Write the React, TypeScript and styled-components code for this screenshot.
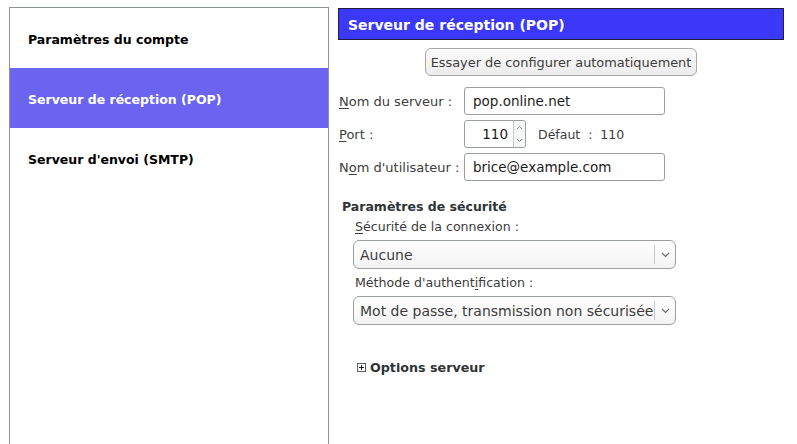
import React from "react";
import styled, { createGlobalStyle } from "styled-components";

const Global = createGlobalStyle`
  html, body { margin: 0; padding: 0; background: #ffffff; }
  body { font-family: "DejaVu Sans", "Liberation Sans", sans-serif; color: #2e3436; }
  #root { height: 444px; overflow: hidden; }
`;

const Page = styled.div`
  display: flex;
  align-items: flex-start;
  height: 444px;
  padding: 7px 0 0 9px;
  box-sizing: border-box;
  gap: 9px;
`;

const Sidebar = styled.nav`
  width: 320px;
  height: 437px;
  box-sizing: border-box;
  border: 1px solid #8c9393;
  border-bottom: none;
  display: flex;
  flex-direction: column;
`;

const NavItem = styled.div<{ $active?: boolean }>`
  height: 60px;
  box-sizing: border-box;
  padding-top: 2px;
  display: flex;
  align-items: center;
  padding-left: 18px;
  font-weight: bold;
  font-size: 12.5px;
  color: ${(p) => (p.$active ? "#ffffff" : "#000000")};
  background: ${(p) => (p.$active ? "#6a64f1" : "transparent")};
`;

const Main = styled.section`
  width: 446px;
  padding-top: 1px;
  display: flex;
  flex-direction: column;
`;

const Header = styled.div`
  height: 32px;
  box-sizing: border-box;
  background: #3b38f9;
  border: 1px solid #1f1f40;
  color: #ffffff;
  font-weight: bold;
  font-size: 14px;
  display: flex;
  align-items: center;
  padding: 1px 0 0 9px;
`;

const ButtonRow = styled.div`
  display: flex;
  justify-content: center;
  margin-top: 8px;
  margin-bottom: 11px;
`;

const Button = styled.button`
  height: 28px;
  width: 272px;
  padding: 0;
  border: 1px solid #a4a8a8;
  border-radius: 6px;
  background: linear-gradient(#fbfbfb, #ececec);
  font-family: "DejaVu Sans", "Liberation Sans", sans-serif;
  font-size: 12.9px;
  color: #3c3c3c;
`;

const FormGrid = styled.div`
  display: grid;
  grid-template-columns: 126px auto;
  row-gap: 5px;
  align-items: center;
`;

const Label = styled.span`
  font-size: 13px;
  color: #3c3c3c;
  padding-left: 1px;
  white-space: nowrap;
  u { text-decoration: underline; text-underline-offset: 2px; }
`;

const TextBox = styled.div`
  width: 201px;
  height: 28px;
  box-sizing: border-box;
  border: 1px solid #9aa0a0;
  border-radius: 3px;
  background: #ffffff;
  display: flex;
  align-items: center;
  padding-left: 8px;
  font-size: 13.5px;
  color: #1c1c1c;
`;

const PortRow = styled.div`
  display: flex;
  align-items: center;
  gap: 12px;
`;

const Spin = styled.div`
  width: 62px;
  height: 28px;
  box-sizing: border-box;
  border: 1px solid #9aa0a0;
  border-radius: 3px;
  background: #ffffff;
  display: flex;
  align-items: stretch;
`;

const SpinValue = styled.div`
  flex: 1;
  display: flex;
  align-items: center;
  justify-content: flex-end;
  padding-right: 5px;
  font-size: 13.5px;
  color: #1c1c1c;
`;

const SpinArrows = styled.div`
  width: 11px;
  border-left: 1px solid #c4c8c8;
  display: flex;
  flex-direction: column;
  align-items: center;
  justify-content: space-around;
  background: #f6f6f6;
  border-radius: 0 3px 3px 0;
`;

const Defaut = styled.span`
  font-size: 12.5px;
  color: #3c3c3c;
  word-spacing: 4px;
`;

const Section = styled.div`
  margin-top: 18px;
  padding-left: 4px;
  display: flex;
  flex-direction: column;
`;

const SectionTitle = styled.div`
  font-weight: bold;
  font-size: 12.5px;
  color: #2e3436;
  margin-bottom: 5px;
`;

const SubLabel = styled.div`
  font-size: 12.6px;
  color: #3c3c3c;
  padding-left: 13px;
  margin-bottom: 6px;
  u { text-decoration: underline; text-underline-offset: 2px; }
`;

const Select = styled.div`
  margin-left: 11px;
  width: 323px;
  height: 29px;
  box-sizing: border-box;
  border: 1px solid #9aa0a0;
  border-radius: 6px;
  background: linear-gradient(#ffffff, #f3f3f3);
  display: flex;
  align-items: center;
  margin-bottom: 6px;
`;

const SelectText = styled.div`
  flex: 1;
  padding-left: 6px;
  font-size: 14px;
  color: #3c3c3c;
  white-space: nowrap;
  overflow: hidden;
`;

const SelectArrow = styled.div`
  width: 20px;
  height: 19px;
  border-left: 1px solid #c4c8c8;
  display: flex;
  align-items: center;
  justify-content: center;
`;

const Expander = styled.div`
  margin-top: 29px;
  padding-left: 19px;
  display: flex;
  align-items: center;
  gap: 4px;
  font-weight: bold;
  font-size: 12.7px;
  color: #2e3436;
`;

const Chevron = () => (
  <svg width="9" height="6" viewBox="0 0 9 6">
    <path d="M1 1 L4.5 4.5 L8 1" fill="none" stroke="#6a6f70" strokeWidth="1.2" />
  </svg>
);

const PlusBox = () => (
  <svg width="9" height="9" viewBox="0 0 9 9">
    <rect x="0.5" y="0.5" width="8" height="8" fill="#ffffff" stroke="#5a5f60" />
    <path d="M2 4.5 H7 M4.5 2 V7" stroke="#1e1e1e" strokeWidth="1" />
  </svg>
);

export default function App() {
  return (
    <>
      <Global />
      <Page>
        <Sidebar>
          <NavItem>Paramètres du compte</NavItem>
          <NavItem $active>Serveur de réception (POP)</NavItem>
          <NavItem>Serveur d'envoi (SMTP)</NavItem>
        </Sidebar>
        <Main>
          <Header>Serveur de réception (POP)</Header>
          <ButtonRow>
            <Button>Essayer de configurer automatiquement</Button>
          </ButtonRow>
          <FormGrid>
            <Label><u>N</u>om du serveur :</Label>
            <TextBox>pop.online.net</TextBox>
            <Label><u>P</u>ort :</Label>
            <PortRow>
              <Spin>
                <SpinValue>110</SpinValue>
                <SpinArrows>
                  <svg width="7" height="5" viewBox="0 0 7 5">
                    <path d="M1 4 L3.5 1.5 L6 4" fill="none" stroke="#8a8f90" strokeWidth="1" />
                  </svg>
                  <svg width="7" height="5" viewBox="0 0 7 5">
                    <path d="M1 1 L3.5 3.5 L6 1" fill="none" stroke="#8a8f90" strokeWidth="1" />
                  </svg>
                </SpinArrows>
              </Spin>
              <Defaut>Défaut : 110</Defaut>
            </PortRow>
            <Label>N<u>o</u>m d'utilisateur :</Label>
            <TextBox>brice@example.com</TextBox>
          </FormGrid>
          <Section>
            <SectionTitle>Paramètres de sécurité</SectionTitle>
            <SubLabel><u>S</u>écurité de la connexion :</SubLabel>
            <Select>
              <SelectText>Aucune</SelectText>
              <SelectArrow><Chevron /></SelectArrow>
            </Select>
            <SubLabel>Méthode d'authent<u>i</u>fication :</SubLabel>
            <Select>
              <SelectText>Mot de passe, transmission non sécurisée</SelectText>
              <SelectArrow><Chevron /></SelectArrow>
            </Select>
          </Section>
          <Expander>
            <PlusBox />
            Options serveur
          </Expander>
        </Main>
      </Page>
    </>
  );
}
